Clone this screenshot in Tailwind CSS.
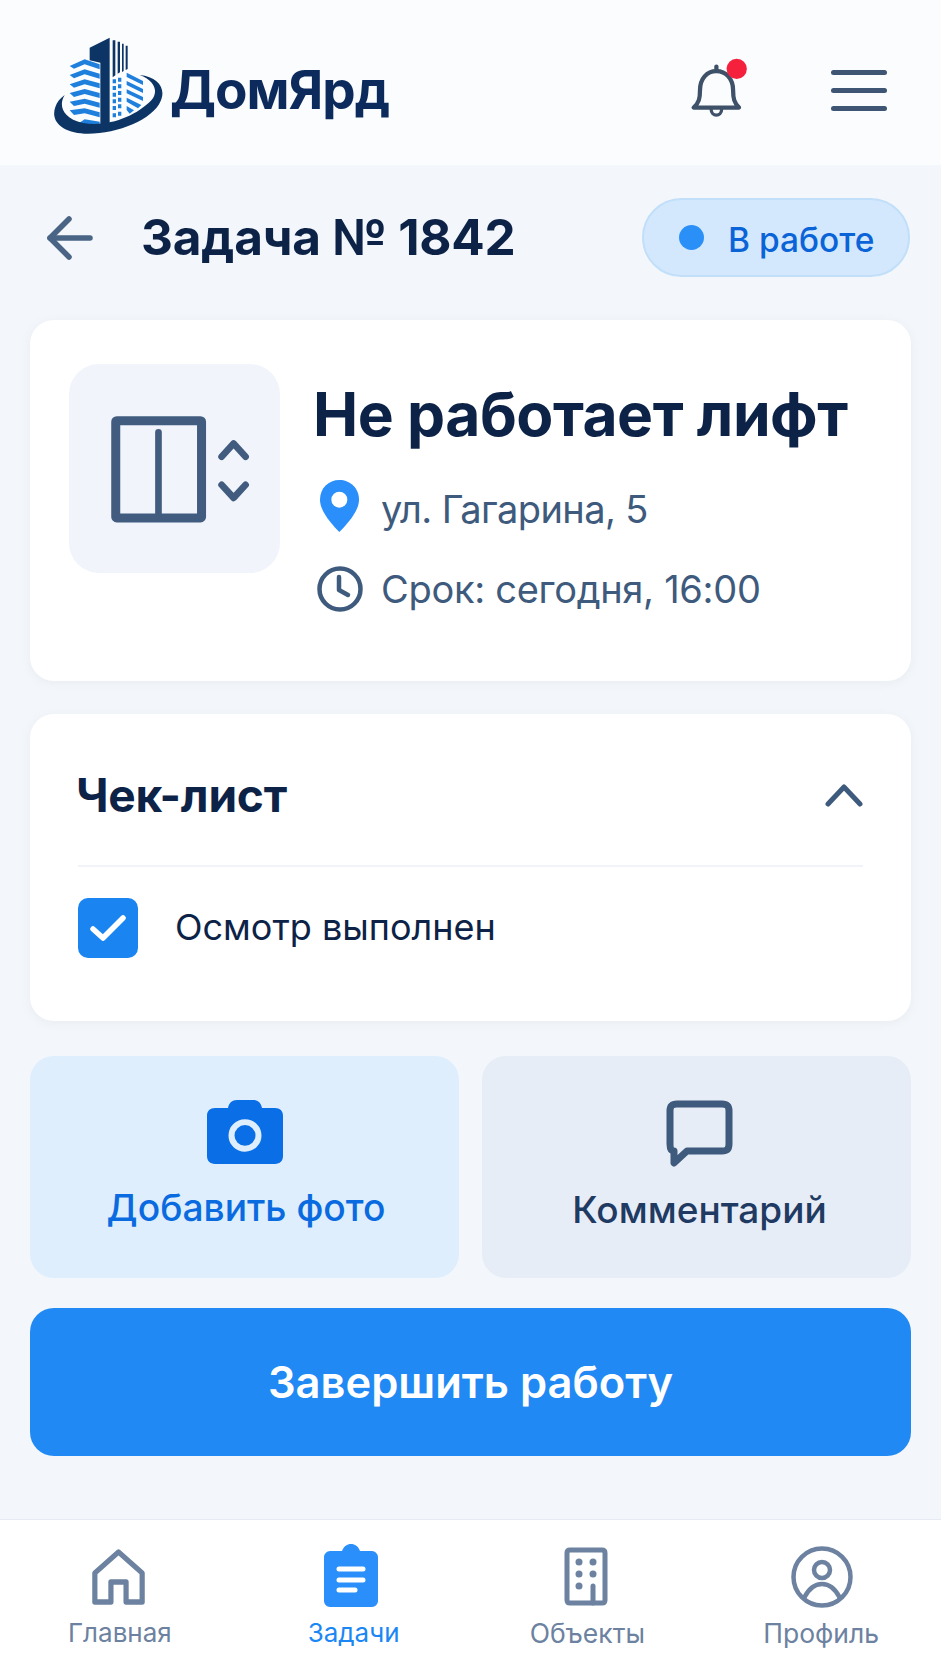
<!DOCTYPE html>
<html lang="ru">

<head>
    <meta charset="utf-8">
    <meta name="viewport" content="width=device-width, initial-scale=1">
    <title>ДомЯрд</title>
    <script src="https://cdn.jsdelivr.net/npm/@tailwindcss/browser@4"></script>
</head>

<body class="bg-[#f3f6fa] font-['Inter',sans-serif] text-[#0c2347]">
    <div class="flex h-[1672px] w-[941px] flex-col overflow-hidden">

        <!-- header -->
        <header class="flex h-[165px] items-center bg-[#fbfcfe] pt-[16px] pr-[54px] pl-[54px]">
            <div class="flex items-center">
                <svg class="mt-[-10px] h-[100px] w-[110px]" viewBox="158 105 330 300">
                    <path d="M265 140 L325 110 V368 L297 370 V185 L265 178 Z" fill="#0c3566" />
                    <path d="M334 118h8v105l-8 6zM349 122h7v92l-7 4zM362 128h5v82l-5 3zM373 134h6v70l-6 3z" fill="#0c3566" />
                    <g fill="#1f7fdc">
                        <path d="M205 195 L250 175 L295 190 V205 L250 190 L218 203 Z" />
                        <path d="M205 222 L250 205 L295 218 V233 L250 220 L218 232 Z" />
                        <path d="M205 250 L250 235 L295 247 V262 L250 250 L218 260 Z" />
                        <path d="M205 276 L250 264 L295 276 V291 L250 279 L218 288 Z" />
                        <path d="M205 302 L250 293 L295 305 V320 L250 308 L218 315 Z" />
                        <path d="M205 328 L250 322 L295 334 V349 L250 337 L218 342 Z" />
                        <path d="M228 370 L250 355 L295 362 V370 Z" />
                        <path d="M334 235h10v12h-10zM350 230h10v12h-10zM334 255h10v12h-10zM350 250h10v12h-10zM334 275h10v12h-10zM350 270h10v12h-10zM334 295h10v12h-10zM350 290h10v12h-10zM334 315h10v12h-10zM350 310h10v12h-10zM334 337h10v12h-10zM350 332h10v12h-10z" />
                        <path d="M376 215 L425 240 V252 L376 228 Z M376 240 L425 264 V276 L376 252 Z M376 265 L425 288 V300 L376 277 Z M376 290 L420 312 L410 322 L376 302 Z M376 315 L398 328 L385 338 L376 327 Z" />
                    </g>
                    <path d="M415 222 C470 228 495 262 478 300 C455 355 350 398 260 398 C190 398 145 365 162 318 C166 305 176 292 190 282 C172 310 180 352 245 366 C320 380 405 345 450 298 C472 272 462 240 415 222 Z" fill="#0c3566" />
                </svg>
                <span class="ml-[6px] text-[53px] leading-none font-bold tracking-[-1px] text-[#0c2b5c]">ДомЯрд</span>
            </div>
            <div class="ml-auto flex items-center gap-[83px]">
                <svg class="mt-[-6px] h-[60px] w-[57px]" viewBox="665 172 171 183" fill="none" stroke="#3e5168" stroke-width="13" stroke-linecap="round" stroke-linejoin="round">
                    <path d="M672 323 H810 C795 308 792 295 792 270 C792 235 770 212 741 212 C712 212 691 235 691 270 C691 295 688 308 672 323 Z" />
                    <path d="M741 198 V210" />
                    <path d="M725 328 C725 352 757 352 757 328" stroke-width="10" />
                    <circle cx="803" cy="205" r="31" fill="#f5203c" stroke="none" />
                </svg>
                <div class="flex w-[56px] flex-col gap-[13px]">
                    <div class="h-[5px] rounded-full bg-[#3e5673]"></div>
                    <div class="h-[5px] rounded-full bg-[#3e5673]"></div>
                    <div class="h-[5px] rounded-full bg-[#3e5673]"></div>
                </div>
            </div>
        </header>

        <!-- task title row -->
        <div class="mt-[33px] flex h-[79px] items-center pr-[31px] pl-[47px]">
            <svg class="h-[44px] w-[46px]" viewBox="0 0 46 44" fill="none" stroke="#4a6485" stroke-width="5.5" stroke-linecap="round" stroke-linejoin="round">
                <path d="M22 3 L3 22 L22 41" />
                <path d="M3 22 H43" />
            </svg>
            <h1 class="ml-[48px] text-[49.5px] leading-none font-bold tracking-[-0.2px]">Задача № 1842</h1>
            <div class="ml-auto flex h-[79px] w-[268px] items-center rounded-full border-2 border-[#c2dffa] bg-[#d3e8fd] pl-[35px]">
                <span class="h-[25px] w-[25px] rounded-full bg-[#2a90f8]"></span>
                <span class="mt-[6px] ml-[24px] text-[33.5px] leading-none font-medium text-[#0a64d8]">В работе</span>
            </div>
        </div>

        <main class="flex flex-col px-[30px]">
            <!-- task card -->
            <section class="mt-[43px] flex h-[361px] rounded-[24px] bg-white pt-[44px] pl-[39px] shadow-[0_2px_10px_rgba(148,163,184,0.10)]">
                <svg class="h-[209px] w-[211px] shrink-0" viewBox="148 162 632 626">
                    <rect x="148" y="162" width="632" height="626" rx="90" fill="#f1f5fb" />
                    <rect x="288" y="332" width="257" height="291" rx="3" fill="none" stroke="#425c7f" stroke-width="27" />
                    <path d="M416 367 V625" stroke="#425c7f" stroke-width="20" stroke-linecap="round" />
                    <path d="M605 440 L641 400 L677 440 M605 524 L641 563 L677 524" fill="none" stroke="#425c7f" stroke-width="20" stroke-linecap="round" stroke-linejoin="round" />
                </svg>
                <div class="ml-[33px] flex flex-col">
                    <h2 class="mt-[15px] text-[60.5px] leading-[70px] font-bold tracking-[-0.5px] whitespace-nowrap">Не работает лифт</h2>
                    <div class="mt-[30px] flex h-[60px] items-center text-[38px] tracking-[-0.6px] text-[#3e5a7d]">
                        <svg class="mt-[-6px] ml-[7px] h-[52px] w-[39px]" viewBox="900 516 117 156">
                            <path d="M958 516 C990 516 1017 540 1017 575 C1017 610 980 650 958 672 C936 650 900 610 900 575 C900 540 926 516 958 516 Z" fill="#2a8ffa" />
                            <circle cx="958" cy="575" r="24" fill="#fff" />
                        </svg>
                        <span class="ml-[22px]">ул. Гагарина, 5</span>
                    </div>
                    <div class="mt-[20px] flex h-[60px] items-center text-[38px] tracking-[-0.3px] text-[#3e5a7d]">
                        <svg class="ml-[4px] h-[46px] w-[46px]" viewBox="0 0 46 46" fill="none" stroke="#3e5a7d" stroke-width="4.5" stroke-linecap="round" stroke-linejoin="round">
                            <circle cx="23" cy="23" r="20.5" />
                            <path d="M22 11 V24 L31 29" />
                        </svg>
                        <span class="ml-[18px]">Срок: сегодня, 16:00</span>
                    </div>
                </div>
            </section>

            <!-- checklist -->
            <section class="mt-[33px] flex h-[307px] flex-col rounded-[24px] bg-white pr-[48px] pl-[48px] shadow-[0_2px_10px_rgba(148,163,184,0.10)]">
                <div class="flex h-[153px] items-center justify-between border-b-2 border-[#f0f3f8] pt-[10px]">
                    <h3 class="ml-[-2px] text-[46px] leading-none font-bold tracking-[-0.2px]">Чек-лист</h3>
                    <svg class="h-[24px] w-[38px]" viewBox="0 0 38 24" fill="none" stroke="#3e5a7d" stroke-width="5" stroke-linecap="round" stroke-linejoin="round">
                        <path d="M3 21 L19 4 L35 21" />
                    </svg>
                </div>
                <div class="mt-[31px] flex items-center">
                    <span class="flex h-[60px] w-[60px] items-center justify-center rounded-[10px] bg-[#1a84f0]">
                        <svg class="h-[28px] w-[36px]" viewBox="0 0 36 28" fill="none" stroke="#fff" stroke-width="5.5" stroke-linecap="round" stroke-linejoin="round">
                            <path d="M3 15 L13 24 L33 4" />
                        </svg>
                    </span>
                    <span class="mb-[2px] ml-[37px] text-[36px] leading-none">Осмотр выполнен</span>
                </div>
            </section>

            <!-- actions -->
            <div class="mt-[35px] grid h-[222px] grid-cols-2 gap-[23px]">
                <button class="flex flex-col items-center rounded-[24px] bg-[#deeefd] pt-[44px]">
                    <svg class="h-[64px] w-[76px]" viewBox="0 0 76 65" preserveAspectRatio="none">
                        <path d="M8 8 H21 C22 3 25 0 30 0 H46 C51 0 54 3 55 8 H68 C73 8 76 11 76 16 V57 C76 62 73 65 68 65 H8 C3 65 0 62 0 57 V16 C0 11 3 8 8 8 Z" fill="#0a6fe6" />
                        <circle cx="38" cy="36" r="13.5" fill="none" stroke="#deeefd" stroke-width="6" />
                    </svg>
                    <span class="mt-[25px] ml-[3px] text-[37.2px] leading-none font-medium text-[#0a6be0]">Добавить фото</span>
                </button>
                <button class="flex flex-col items-center rounded-[24px] bg-[#e7edf6] pt-[44px] pl-[6px]">
                    <svg class="h-[67px] w-[67px]" viewBox="0 0 67 67" fill="none" stroke="#3e5a7d" stroke-width="7" stroke-linejoin="round" stroke-linecap="round">
                        <path d="M11 4 H56 C61 4 63 6 63 11 V44 C63 49 61 51 56 51 H21 L8 63 V51 C5 51 4 49 4 44 V11 C4 6 6 4 11 4 Z" />
                    </svg>
                    <span class="mt-[24px] text-[37px] leading-none font-medium text-[#1f3a63]">Комментарий</span>
                </button>
            </div>

            <button class="mt-[30px] h-[148px] rounded-[24px] bg-[#2089f3] pt-[2px] text-[43.5px] font-semibold text-white">Завершить работу</button>
        </main>

        <!-- bottom nav -->
        <nav class="mt-auto grid h-[153px] grid-cols-4 border-t border-[#e6ebf3] bg-white px-[3px] pt-[24px] text-[26px] leading-none text-[#6c82a0]">
            <a class="flex flex-col items-center">
                <svg class="mr-[3px] h-[62px] w-[53px]" viewBox="0 0 56 62" preserveAspectRatio="none" fill="none" stroke="#6c82a0" stroke-width="5.5" stroke-linejoin="round">
                    <path d="M28 8 L53 29 V58 H36 V38 H20 V58 H3 V29 Z" />
                </svg>
                <span class="mt-[14px]">Главная</span>
            </a>
            <a class="flex flex-col items-center text-[#1a87f5]">
                <svg class="mr-[6px] h-[63px] w-[54px]" viewBox="0 0 54 63">
                    <path d="M6 7 H18 C20 2 23 0 27 0 C31 0 34 2 36 7 H48 C51 7 54 10 54 13 V57 C54 60 51 63 48 63 H6 C3 63 0 60 0 57 V13 C0 10 3 7 6 7 Z" fill="#2a8ffa" />
                    <path d="M15 25 H39 M15 36 H39 M15 46 H31" stroke="#fff" stroke-width="5" stroke-linecap="round" />
                </svg>
                <span class="mt-[13px]">Задачи</span>
            </a>
            <a class="flex flex-col items-center">
                <svg class="mt-[3px] mr-[2px] h-[59px] w-[44px]" viewBox="0 0 44 59" fill="none" stroke="#6c82a0" stroke-width="5" stroke-linecap="round" stroke-linejoin="round">
                    <path d="M6 3 H38 C40 3 41 4 41 6 V53 C41 55 40 56 38 56 H6 C4 56 3 55 3 53 V6 C3 4 4 3 6 3 Z" />
                    <path d="M29 39 V56" />
                    <g fill="#6c82a0" stroke="none">
                        <circle cx="15" cy="15" r="3.5" /><circle cx="29" cy="15" r="3.5" />
                        <circle cx="15" cy="27" r="3.5" /><circle cx="29" cy="27" r="3.5" />
                        <circle cx="15" cy="39" r="3.5" />
                    </g>
                </svg>
                <span class="mt-[14px] text-[26.5px]">Объекты</span>
            </a>
            <a class="flex flex-col items-center">
                <svg class="mt-[2px] ml-[2px] h-[62px] w-[62px]" viewBox="0 0 62 62" fill="none" stroke="#6c82a0" stroke-width="4.5">
                    <circle cx="31" cy="31" r="28.5" />
                    <circle cx="31" cy="24" r="8" />
                    <path d="M13 52 C18 42 24 38 31 38 C38 38 44 42 49 52" />
                </svg>
                <span class="mt-[12px] text-[26.5px]">Профиль</span>
            </a>
        </nav>
    </div>
</body>

</html>
